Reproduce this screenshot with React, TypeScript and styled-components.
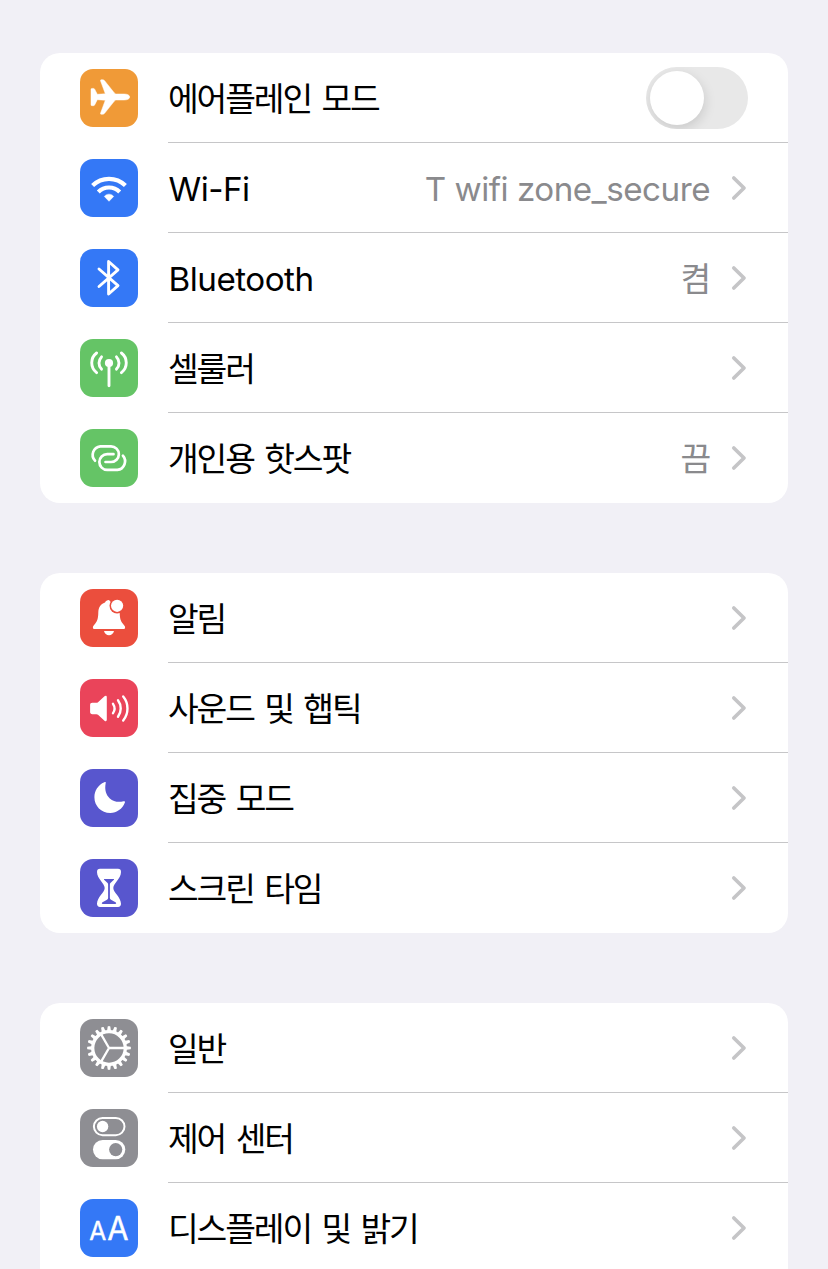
import React from 'react';
import styled, { createGlobalStyle } from 'styled-components';

const GlobalStyle = createGlobalStyle`
  * { box-sizing: border-box; }
  html, body { margin: 0; padding: 0; background: #f1f0f6; overflow: hidden; }
  body { font-family: Inter, "Noto Sans CJK KR", sans-serif; }
`;

const Page = styled.main`
  height: 1269px;
  padding: 53px 40px 0;
  display: flex;
  flex-direction: column;
  gap: 70px;
  overflow: hidden;
  background: #f1f0f6;
`;

const Card = styled.section`
  flex: none;
  background: #fff;
  border-radius: 20px;
  overflow: hidden;

  &:last-child { border-radius: 20px 20px 0 0; }
`;

const Row = styled.div`
  height: 90px;
  padding-left: 40px;
  display: flex;
  align-items: stretch;
  gap: 30px;
`;

const Tile = styled.div<{ $color: string }>`
  flex: none;
  width: 58px;
  height: 58px;
  margin-top: 16px;
  border-radius: 13px;
  background: ${(p) => p.$color};

  svg { display: block; }
`;

const Content = styled.div<{ $divided: boolean }>`
  flex: 1;
  display: flex;
  align-items: center;
  padding-right: 40px;
  border-bottom: 1px solid ${(p) => (p.$divided ? '#c6c6c8' : 'transparent')};
`;

const Label = styled.span<{ $latin: boolean }>`
  font-size: ${(p) => (p.$latin ? 33.2 : 33.4)}px;
  line-height: 48px;
  letter-spacing: ${(p) => (p.$latin ? -0.5 : -2.1)}px;
  word-spacing: ${(p) => (p.$latin ? 0 : 3.1)}px;
  white-space: pre;
  color: #000;
  margin-left: ${(p) => (p.$latin ? 0.5 : 0)}px;
  margin-top: 2px;
`;

const Value = styled(Label)`
  color: #8a8a8d;
  margin-right: ${(p) => (p.$latin ? 0 : 1)}px;
`;

const Chevron = styled.svg`
  flex: none;
  width: 18px;
  height: 28px;
`;

const ValueGroup = styled.div`
  margin-left: auto;
  display: flex;
  align-items: center;
  gap: 20px;
`;

const Switch = styled.div`
  margin-left: auto;
  width: 102px;
  height: 62px;
  padding: 4px;
  border-radius: 31px;
  background: #e8e8e8;
  overflow: hidden;
`;

const Knob = styled.div`
  width: 54px;
  height: 54px;
  border-radius: 50%;
  background: #fff;
  box-shadow: 1px 4px 12px rgba(0, 0, 0, 0.13);
`;

const Icon = ({ children }: { children: React.ReactNode }) => (
  <svg width="58" height="58" viewBox="0 0 58 58" fill="none" stroke="none">
    {children}
  </svg>
);

const line = { stroke: '#fff', strokeLinecap: 'round', strokeLinejoin: 'round' } as const;

const Plane = () => (
  <Icon>
    <path
      fill="#fff"
      stroke="#fff"
      strokeWidth="0.500"
      d="M49.700 28c0 1.800-2.400 3-5.500 3H36.500c-1 0-1.500.3-2.100 1L24.600 44.300c-.6.7-1.200 1-2 1h-1.200c-.8 0-1.100-.6-.8-1.300L25.300 31.200l-8-.5-2.500 5c-.3.700-.8 1-1.500 1h-1.400c-.6 0-.9-.4-.9-1V20.400c0-.6.3-1 .9-1h1.400c.7 0 1.200.3 1.500 1l2.500 4.900 8-.5L20.600 12c-.3-.7 0-1.300.8-1.300h1.200c.8 0 1.400.3 2 1L34.400 24c.6.700 1.100 1 2.100 1h7.700c3.100 0 5.500 1.200 5.500 3z"
    />
  </Icon>
);

const Wifi = () => (
  <Icon>
    <path stroke="#fff" strokeWidth="4.200" d="M12.600 26.600A23.500 23.500 0 0 1 45.400 26.600" />
    <path stroke="#fff" strokeWidth="4.200" d="M18.300 32.900A15.200 15.200 0 0 1 39.700 32.900" />
    <path fill="#fff" stroke="#fff" strokeWidth="0.500" strokeLinejoin="round" d="M24.300 37.400c2.800-3 6.600-3 9.400 0L29 42.300z" />
  </Icon>
);

const Bluetooth = () => (
  <Icon>
    <path {...line} strokeWidth="2.900" d="M19 20L38 36.600L28.600 45V12.500L38 20.800L19 37.500" />
  </Icon>
);

const Antenna = () => (
  <Icon>
    <circle cx="29" cy="24" r="4.100" fill="#fff" />
    <path
      {...line}
      strokeWidth="2.900"
      d="M29 25V46.700M21.500 17.900a8.700 8.700 0 0 0 0 12.200M36.500 17.900a8.700 8.700 0 0 1 0 12.200M16.600 14a12.300 12.300 0 0 0 0 19.600M41.400 14a12.300 12.300 0 0 1 0 19.600"
    />
  </Icon>
);

const Hotspot = () => (
  <Icon>
    <path
      stroke="#fff"
      strokeWidth="2.700"
      d="M15 31.700A8.600 8.600 0 0 1 20.300 17.300H31A7.850 7.850 0 0 1 31 33H25.500"
      strokeLinecap="round"
    />
    <path
      stroke="#fff"
      strokeWidth="2.700"
      d="M33.500 25.200H27.200A7.850 7.850 0 0 0 27.200 40.900H37.400A8.600 8.600 0 0 0 42.900 26.700"
      strokeLinecap="round"
    />
  </Icon>
);

const Bell = () => (
  <Icon>
    <path
      fill="#fff"
      d="M29 11c-2 0-3.400 1-4 2.500-4.500 1.500-6.600 5.200-6.700 10-.1 5.500-.9 8.500-3 11-1.500 1.900-2.400 2.700-2.400 4 0 1 .7 1.600 1.800 1.600h28.600c1.100 0 1.800-.6 1.800-1.600 0-1.300-.9-2.100-2.400-4-2.100-2.500-2.900-5.500-3-11z"
    />
    <circle cx="37.100" cy="16.800" r="7.600" fill="#eb4e3d" />
    <circle cx="37.100" cy="16.800" r="6.100" fill="#fff" />
    <path fill="#fff" d="M24 42h10c-.6 2.500-2.500 4.200-5 4.200s-4.400-1.700-5-4.200z" />
  </Icon>
);

const Speaker = () => (
  <Icon>
    <path
      fill="#fff"
      d="M12.300 23.800h4.200c.6 0 1-.2 1.500-.6l6.500-5.900c1.100-1 2.300-.6 2.300.9v22.600c0 1.500-1.200 1.900-2.300.9l-6.500-5.900c-.5-.4-.9-.6-1.500-.6h-4.200c-1.400 0-2.200-.8-2.200-2.200v-7c0-1.400.8-2.200 2.200-2.200z"
    />
    <path
      {...line}
      strokeWidth="2.400"
      d="M33 24.800a8.500 8.500 0 0 1 0 9.400M38 21.200a14 14 0 0 1 0 16.600M43.200 17.500a19 19 0 0 1 0 24"
    />
  </Icon>
);

const Moon = () => (
  <Icon>
    <path
      fill="#fff"
      d="M25.700 14.100C24.300 21.500 26.400 26.300 29.800 29.400C33.400 32.700 38.300 33.500 43.500 32.300C44.800 32 45.300 32.700 44.800 33.800C42.300 39.900 36.900 43.900 30.300 43.900C21.200 43.900 14.400 37 14.400 28.200C14.400 21.600 18.200 15.800 24.300 13.200C25.400 12.700 26 13 25.700 14.100Z"
    />
  </Icon>
);

const Hourglass = () => (
  <Icon>
    <path
      fill="#fff"
      d="M20 9.800H38C40 9.800 41 11 41 13C41 19.800 33.300 24.500 33.300 28.900C33.300 33.300 41 38 41 44.800C41 46.800 40 48 38 48H20C18 48 17 46.800 17 44.800C17 38 24.700 33.300 24.700 28.900C24.700 24.500 17 19.800 17 13C17 11 18 9.800 20 9.800Z"
    />
    <path
      fill="#5856ce"
      d="M24.300 20H33.700C34 20 34.200 20.400 33.900 20.700L30.400 24C30 24.500 29.900 25 29.900 25.700V39C29.900 39.800 30.300 40.300 31 40.700L35.500 43.200C36.600 43.900 36.300 45 35.200 45H22.800C21.700 45 21.400 43.900 22.500 43.200L27 40.700C27.700 40.300 28.100 39.800 28.100 39V25.700C28.100 25 28 24.500 27.600 24L24.100 20.700C23.800 20.400 24 20 24.300 20Z"
    />
  </Icon>
);

const teeth = Array.from({ length: 20 }, (_, i) => i * 18);

const Gear = () => (
  <Icon>
    {teeth.map((angle) => (
      <path key={angle} fill="#fff" transform={`rotate(${angle} 29 29)`} d="M26.900 13L27.700 7.400Q29 6.600 30.300 7.400L31.100 13Z" />
    ))}
    <circle cx="29" cy="29" r="16.300" stroke="#fff" strokeWidth="3.300" />
    <path stroke="#fff" strokeWidth="2.300" d="M29 29H45M29 29L21 15.100M29 29L21 42.900" />
  </Icon>
);

const Controls = () => (
  <Icon>
    <rect x="13.900" y="8.900" width="30.600" height="17.300" rx="8.650" stroke="#fff" strokeWidth="2" />
    <circle cx="22.600" cy="17.500" r="5.700" fill="#fff" />
    <rect x="13" y="31" width="32.300" height="19.200" rx="9.600" fill="#fff" />
    <circle cx="35.700" cy="40.600" r="6.600" fill="#8e8e93" />
  </Icon>
);

const TextSize = () => (
  <Icon>
    <g fill="#fff" stroke="#fff" strokeWidth="0.400" strokeLinejoin="round" fontFamily="Inter, sans-serif">
      <text x="9.200" y="40.800" fontSize="25" textLength="17" lengthAdjust="spacingAndGlyphs">A</text>
      <text x="27.300" y="40.800" fontSize="32.500" textLength="21.300" lengthAdjust="spacingAndGlyphs">A</text>
    </g>
  </Icon>
);

type Item = {
  label: string;
  color: string;
  icon: React.FC;
  latin?: boolean;
  value?: string;
  valueLatin?: boolean;
  toggle?: boolean;
};

const groups: Item[][] = [
  [
    { label: '에어플레인 모드', color: '#f09a37', icon: Plane, toggle: true },
    { label: 'Wi-Fi', color: '#3478f6', icon: Wifi, latin: true, value: 'T wifi zone_secure', valueLatin: true },
    { label: 'Bluetooth', color: '#3478f6', icon: Bluetooth, latin: true, value: '켬' },
    { label: '셀룰러', color: '#65c466', icon: Antenna },
    { label: '개인용 핫스팟', color: '#65c466', icon: Hotspot, value: '끔' },
  ],
  [
    { label: '알림', color: '#eb4e3d', icon: Bell },
    { label: '사운드 및 햅틱', color: '#ea445a', icon: Speaker },
    { label: '집중 모드', color: '#5856ce', icon: Moon },
    { label: '스크린 타임', color: '#5856ce', icon: Hourglass },
  ],
  [
    { label: '일반', color: '#8e8e93', icon: Gear },
    { label: '제어 센터', color: '#8e8e93', icon: Controls },
    { label: '디스플레이 및 밝기', color: '#3478f6', icon: TextSize },
  ],
];

const Disclosure = () => (
  <Chevron viewBox="0 0 18 28" fill="none">
    <path d="M3.800 4L14 14L3.800 24" stroke="#c5c5c7" strokeWidth="3.700" strokeLinecap="round" strokeLinejoin="round" />
  </Chevron>
);

const SettingRow = ({ item, divided }: { item: Item; divided: boolean }) => (
  <Row>
    <Tile $color={item.color}>
      <item.icon />
    </Tile>
    <Content $divided={divided}>
      <Label $latin={!!item.latin}>{item.label}</Label>
      {item.toggle ? (
        <Switch role="switch" aria-checked={false}>
          <Knob />
        </Switch>
      ) : (
        <ValueGroup>
          {item.value && <Value $latin={!!item.valueLatin}>{item.value}</Value>}
          <Disclosure />
        </ValueGroup>
      )}
    </Content>
  </Row>
);

export default function App() {
  return (
    <>
      <GlobalStyle />
      <Page>
        {groups.map((group, g) => (
          <Card key={g}>
            {group.map((item, i) => (
              <SettingRow key={item.label} item={item} divided={i < group.length - 1} />
            ))}
          </Card>
        ))}
      </Page>
    </>
  );
}
